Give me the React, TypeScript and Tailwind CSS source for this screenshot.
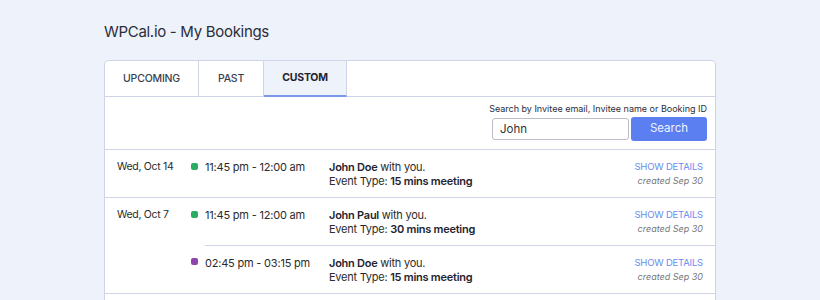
import { useState } from "react";

type Booking = {
  time: string;
  name: string;
  eventType: string;
  color: string;
};

type DayGroup = {
  date: string;
  bookings: Booking[];
};

const groups: DayGroup[] = [
  {
    date: "Wed, Oct 14",
    bookings: [{ time: "11:45 pm - 12:00 am", name: "John Doe", eventType: "15 mins meeting", color: "bg-[#27ae60]" }],
  },
  {
    date: "Wed, Oct 7",
    bookings: [
      { time: "11:45 pm - 12:00 am", name: "John Paul", eventType: "30 mins meeting", color: "bg-[#27ae60]" },
      { time: "02:45 pm - 03:15 pm", name: "John Doe", eventType: "15 mins meeting", color: "bg-[#8e44ad]" },
    ],
  },
];

const tabs = [
  { label: "UPCOMING", width: "w-[94px]" },
  { label: "PAST", width: "w-[65px]" },
  { label: "CUSTOM", width: "w-[83px]" },
];

export default function App() {
  const [activeTab, setActiveTab] = useState("CUSTOM");
  const [query, setQuery] = useState("John");

  return (
    <div className="min-h-[300px] bg-[#eef2fa] px-[104px] pt-[22px] font-['Inter','Noto_Sans',sans-serif] text-[#2b2b2b]">
      <h1 className="text-[15px] leading-[20px] tracking-[-0.3px] text-[#2a2e3b]">WPCal.io - My Bookings</h1>

      <div className="mt-[18px] w-[612px] rounded-[4px] border border-[#cfd5e6] bg-white pb-[24px]">
        <div className="flex h-[36px] border-b border-[#cfd5e6]">
          {tabs.map((tab) => (
            <button
              key={tab.label}
              onClick={() => setActiveTab(tab.label)}
              className={
                activeTab === tab.label
                  ? "-mb-px flex items-center justify-center border-r border-b-2 border-r-[#cfd5e6] border-b-[#7b98ee] bg-[#eef2fa] text-[10.5px] font-bold tracking-[-0.2px] text-[#1f2430] " + tab.width
                  : "flex items-center justify-center border-r border-[#cfd5e6] text-[10.5px] font-medium tracking-[-0.2px] text-[#3a3f4e] " + tab.width
              }
            >
              {tab.label}
            </button>
          ))}
        </div>

        <div className="flex flex-col items-end border-b border-[#cfd5e6] px-[8px] pt-[6px] pb-[8px]">
          <div className="text-[9px] leading-[12px] text-[#2a2e3b]">Search by Invitee email, Invitee name or Booking ID</div>
          <div className="mt-[2px] flex items-center gap-[2px]">
            <input
              value={query}
              onChange={(e) => setQuery(e.target.value)}
              className="h-[22px] w-[137px] rounded-[3px] border border-[#b9bdc6] px-[7px] text-[11.5px] text-[#333] outline-none"
            />
            <button className="h-[24px] w-[76px] rounded-[3px] bg-[#5b7ff0] text-[11.5px] text-[#f0f3ff]">Search</button>
          </div>
        </div>

        {groups.map((group) => (
          <div key={group.date} className="flex border-b border-[#cfd5e6]">
            <div className="w-[86px] shrink-0 pt-[10px] pl-[12px] text-[10.5px] leading-[14px] tracking-[-0.3px]">
              {group.date}
            </div>
            <div className="flex-1">
              {group.bookings.map((b, i) => (
                <div key={b.time + b.name} className="flex">
                  <div className="w-[14px] shrink-0 pt-[13px]">
                    <div className={"h-[7px] w-[7px] rounded-[2px] " + b.color} />
                  </div>
                  <div
                    className={
                      i > 0
                        ? "flex flex-1 border-t border-[#cfd5e6] pt-[10px] pb-[9px]"
                        : "flex flex-1 pt-[10px] pb-[9px]"
                    }
                  >
                    <div className="w-[124px] shrink-0 text-[11px] leading-[14px] tracking-[-0.2px]">{b.time}</div>
                    <div className="flex-1 text-[11px] leading-[14px] tracking-[-0.25px]">
                      <div>
                        <span className="font-semibold text-[#1f2430]">{b.name}</span> with you.
                      </div>
                      <div>
                        Event Type: <span className="font-semibold text-[#1f2430]">{b.eventType}</span>
                      </div>
                    </div>
                    <div className="pr-[12px] text-right">
                      <div className="text-[9.5px] leading-[14px] tracking-[-0.2px] text-[#6a8cf0]">SHOW DETAILS</div>
                      <div className="text-[9px] italic leading-[13px] text-[#777]">created Sep 30</div>
                    </div>
                  </div>
                </div>
              ))}
            </div>
          </div>
        ))}
      </div>
    </div>
  );
}
